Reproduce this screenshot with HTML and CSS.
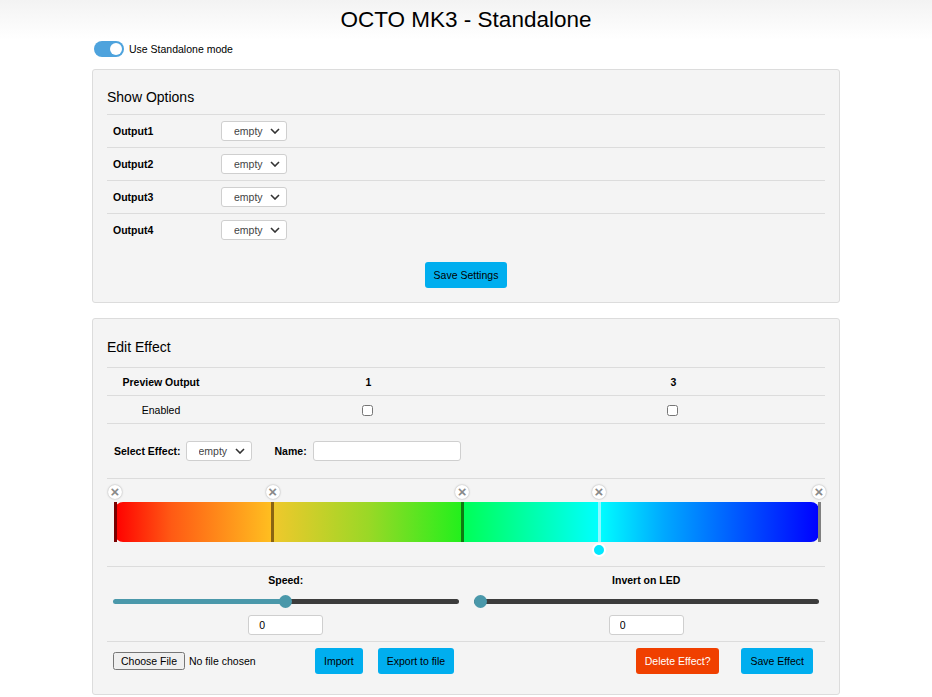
FILE: index.html
```html
<!DOCTYPE html>
<html lang="en">
<head>
    <meta charset="UTF-8">
    <meta name="viewport" content="width=device-width, initial-scale=1.0">
    <title>OCTO MK3 - Standalone</title>
    <link rel="stylesheet" href="styles.css">
</head>
<body>
    <header class="top">
        <h1>OCTO MK3 - Standalone</h1>
    </header>

    <main class="page">
        <label class="mode">
            <span class="switch"><span class="knob"></span></span>
            Use Standalone mode
        </label>

        <section class="card">
            <h2 class="card-title">Show Options</h2>
            <div class="outputs">
                <div class="out-row">
                    <span class="out-label">Output1</span>
                    <select class="sel"><option>empty</option></select>
                </div>
                <div class="out-row">
                    <span class="out-label">Output2</span>
                    <select class="sel"><option>empty</option></select>
                </div>
                <div class="out-row">
                    <span class="out-label">Output3</span>
                    <select class="sel"><option>empty</option></select>
                </div>
                <div class="out-row">
                    <span class="out-label">Output4</span>
                    <select class="sel"><option>empty</option></select>
                </div>
            </div>
            <div class="center">
                <button class="btn">Save Settings</button>
            </div>
        </section>

        <section class="card card-edit">
            <h2 class="card-title title-edit">Edit Effect</h2>

            <div class="preview">
                <div class="pv-row">
                    <span class="pv-head">Preview Output</span>
                    <span class="pv-head">1</span>
                    <span class="pv-head">3</span>
                </div>
                <div class="pv-row">
                    <span class="pv-cell">Enabled</span>
                    <span class="pv-cell"><input type="checkbox"></span>
                    <span class="pv-cell"><input type="checkbox"></span>
                </div>
            </div>

            <div class="effect-row">
                <span class="lbl">Select Effect:</span>
                <select class="sel"><option>empty</option></select>
                <span class="lbl name-lbl">Name:</span>
                <input type="text" class="name-input">
            </div>

            <div class="gradient-area">
                <div class="gradient-bar"></div>

                <span class="marker" style="left: 0%; background: #7a0000;"></span>
                <span class="marker" style="left: 22.4%; background: #8a6412;"></span>
                <span class="marker" style="left: 49.3%; background: #0f7a12;"></span>
                <span class="marker" style="left: 68.75%; background: #8ff8ff;"></span>
                <span class="marker" style="left: 100%; background: #808080;"></span>

                <span class="remove" style="left: 0%;">&times;</span>
                <span class="remove" style="left: 22.4%;">&times;</span>
                <span class="remove" style="left: 49.3%;">&times;</span>
                <span class="remove" style="left: 68.75%;">&times;</span>
                <span class="remove" style="left: 100%;">&times;</span>

                <span class="handle" style="left: 68.75%;"></span>
            </div>

            <div class="sliders">
                <div class="slider-col">
                    <span class="lbl">Speed:</span>
                    <input type="range" class="range range-half" min="0" max="100" value="50">
                    <input type="text" class="num" value="0">
                </div>
                <div class="slider-col">
                    <span class="lbl">Invert on LED</span>
                    <input type="range" class="range" min="0" max="100" value="0">
                    <input type="text" class="num" value="0">
                </div>
            </div>

            <div class="actions">
                <input type="file" class="file">
                <button class="btn btn-import">Import</button>
                <button class="btn btn-export">Export to file</button>
                <button class="btn btn-delete">Delete Effect?</button>
                <button class="btn btn-save">Save Effect</button>
            </div>
        </section>
    </main>
</body>
</html>
```

FILE: styles.css
```css
body {
    margin: 0;
    font-family: "Liberation Sans", Arial, sans-serif;
    color: #000;
    background: #fff;
}

.top {
    height: 40px;
    background: linear-gradient(#f3f3f3, #ffffff);
}

.top h1 {
    margin: 0;
    font-size: 22.5px;
    font-weight: normal;
    line-height: 40px;
    text-align: center;
}

.page {
    width: 748px;
    margin: 0 auto;
}

.mode {
    display: flex;
    align-items: center;
    gap: 5px;
    margin: 1px 0 0 2px;
    font-size: 10.5px;
    height: 16px;
}

.switch {
    width: 30px;
    height: 16px;
    border-radius: 8px;
    background: #4ea3dd;
    position: relative;
}

.knob {
    position: absolute;
    right: 2px;
    top: 2px;
    width: 12px;
    height: 12px;
    border-radius: 50%;
    background: #fff;
}

.card {
    margin-top: 12px;
    background: #f4f4f4;
    border: 1px solid #dcdcdc;
    border-radius: 3px;
    padding: 0 14px 14px;
}

.card-edit {
    margin-top: 15px;
}

.card-title {
    margin: 0;
    padding: 19px 0 9px;
    font-size: 14px;
    font-weight: normal;
    line-height: 16px;
    border-bottom: 1px solid #dcdcdc;
}

.title-edit {
    padding: 20px 0 12px;
}

.out-row {
    display: grid;
    grid-template-columns: 114px auto;
    justify-content: start;
    align-items: center;
    height: 32px;
    border-bottom: 1px solid #dcdcdc;
}

.out-row:last-child {
    border-bottom: none;
}

.out-label {
    padding-left: 6px;
    font-size: 10.5px;
    font-weight: bold;
}

.sel {
    -webkit-appearance: none;
    appearance: none;
    height: 20px;
    width: 66px;
    padding: 0 0 0 12px;
    font-family: "Liberation Sans", Arial, sans-serif;
    font-size: 10.5px;
    color: #444;
    background: #fff url("data:image/svg+xml;utf8,<svg xmlns='http://www.w3.org/2000/svg' width='10' height='6' viewBox='0 0 10 6'><path d='M1 1l4 4 4-4' fill='none' stroke='%23333' stroke-width='1.6'/></svg>") no-repeat right 6px center;
    border: 1px solid #cfcfcf;
    border-radius: 3px;
}

.center {
    text-align: center;
    margin-top: 16px;
}

.btn {
    height: 26px;
    padding: 0 9px;
    border: none;
    border-radius: 3px;
    background: #00aeef;
    color: #000;
    font-family: "Liberation Sans", Arial, sans-serif;
    font-size: 10.5px;
    cursor: pointer;
}

.pv-row {
    display: grid;
    grid-template-columns: 108px 1fr 1fr;
    align-items: center;
    height: 27px;
    border-bottom: 1px solid #dcdcdc;
    text-align: center;
    font-size: 10.5px;
}

.pv-head {
    font-weight: bold;
    padding-left: 2px;
}

.pv-row:first-child .pv-head:first-child {
    padding-left: 0;
}

.pv-cell input {
    margin: 0;
    width: 11px;
    height: 11px;
    vertical-align: middle;
}

.effect-row {
    display: flex;
    align-items: center;
    height: 54px;
    padding-left: 7px;
    border-bottom: 1px solid #dcdcdc;
}

.lbl {
    font-size: 10.5px;
    font-weight: bold;
}

.effect-row .sel {
    margin-left: 5px;
}

.name-lbl {
    margin-left: 23px;
}

.name-input {
    margin-left: 6px;
    width: 148px;
    height: 20px;
    box-sizing: border-box;
    border: 1px solid #cfcfcf;
    border-radius: 3px;
    background: #fff;
}

.gradient-area {
    position: relative;
    height: 87px;
    margin: 0 6px 0 8px;
}

.gradient-bar {
    position: absolute;
    left: 0;
    right: 0;
    top: 23px;
    height: 40px;
    border-radius: 8px;
    background: linear-gradient(to right,
        #ff0000 0%,
        #ff5a14 8%,
        #ffc020 22.4%,
        #f0c82c 22.4%,
        #9ad826 36%,
        #22f01c 49.3%,
        #00ff55 49.3%,
        #00ffff 68.75%,
        #00a8ff 78%,
        #0000ff 100%);
}

.marker {
    position: absolute;
    top: 23px;
    width: 3px;
    height: 40px;
    margin-left: -1.5px;
}

.remove {
    position: absolute;
    top: 6px;
    width: 14px;
    height: 14px;
    margin-left: -7px;
    border-radius: 50%;
    background: #fff;
    box-shadow: 0 0 2px rgba(0, 0, 0, 0.35);
    color: #8a8a8a;
    font-size: 15px;
    font-weight: bold;
    line-height: 14px;
    text-align: center;
}

.handle {
    position: absolute;
    top: 64px;
    width: 10px;
    height: 10px;
    margin-left: -7px;
    border-radius: 50%;
    background: #00e8ff;
    border: 2px solid #fff;
}

.sliders {
    display: grid;
    grid-template-columns: 1fr 1fr;
    gap: 15px;
    padding: 6px 6px 6px;
    border-top: 1px solid #dcdcdc;
    border-bottom: 1px solid #dcdcdc;
}

.slider-col {
    display: flex;
    flex-direction: column;
    align-items: center;
}

.slider-col .lbl {
    line-height: 14px;
}

.range {
    -webkit-appearance: none;
    appearance: none;
    width: 100%;
    height: 14px;
    margin: 7px 0 0;
    background: transparent;
}

.range::-webkit-slider-runnable-track {
    height: 5px;
    border-radius: 3px;
    background: #3c3c3c;
}

.range-half::-webkit-slider-runnable-track {
    background: linear-gradient(to right, #4a98aa 50%, #3c3c3c 50%);
}

.range::-webkit-slider-thumb {
    -webkit-appearance: none;
    width: 13px;
    height: 13px;
    margin-top: -4px;
    border-radius: 50%;
    background: #4a98aa;
}

.num {
    margin-top: 7px;
    width: 75px;
    height: 20px;
    box-sizing: border-box;
    padding: 0 10px;
    border: 1px solid #cfcfcf;
    border-radius: 3px;
    background: #fff;
    font-family: "Liberation Sans", Arial, sans-serif;
    font-size: 10.5px;
}

.actions {
    display: flex;
    align-items: center;
    padding: 6px 12px 6px 6px;
}

.file {
    width: 190px;
    font-family: "Liberation Sans", Arial, sans-serif;
    font-size: 10.5px;
}

.btn-import {
    margin-left: 12px;
}

.btn-export {
    margin-left: 15px;
}

.btn-delete {
    margin-left: auto;
    background: #f04000;
    color: #fff;
}

.btn-save {
    margin-left: 22px;
}
```
